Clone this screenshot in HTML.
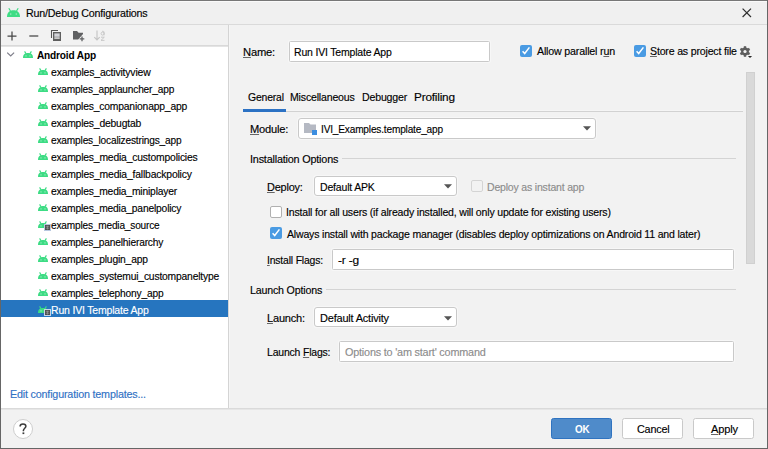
<!DOCTYPE html>
<html><head><meta charset="utf-8"><style>
html,body{margin:0;padding:0;width:768px;height:449px;overflow:hidden;background:#f2f2f2}
.r{position:absolute;display:block}
.t{position:absolute;white-space:pre;font-family:"Liberation Sans",sans-serif;font-size:11.5px;letter-spacing:-0.2px;line-height:15px;color:#000;-webkit-text-stroke:0.15px currentColor;transform-origin:0 0}
u{text-decoration:underline;text-decoration-color:#666;text-underline-offset:0.5px}
</style></head><body>
<div class="r" style="left:0px;top:0px;width:768px;height:449px;background:#f2f2f2"></div>
<div class="r" style="left:1px;top:1px;width:766px;height:23px;background:#f0f0f0"></div>
<div class="r" style="left:1px;top:1px;width:766px;height:1px;background:#fafafa"></div>
<div class="r" style="left:0px;top:24px;width:768px;height:1px;background:#dadada"></div>
<svg class="r" style="left:7px;top:8px" width="13" height="9" viewBox="0 0 13 9"><path d="M0 9 C0 4.4 2.4 2.2 6.5 2.2 C10.6 2.2 13 4.4 13 9 Z" fill="#3ddc84"/><path d="M1.8 0.3 L3.5 3 M11.2 0.3 L9.5 3" stroke="#3ddc84" stroke-width="1.2"/><rect x="3.2" y="5.3" width="1.1" height="1.5" fill="#a4ecc4"/><rect x="8.7" y="5.3" width="1.1" height="1.5" fill="#a4ecc4"/></svg>
<div class="t" style="left:26px;top:6px;transform:scaleX(0.9295);">Run/Debug Configurations</div>
<svg class="r" style="left:742px;top:8px" width="10" height="10" viewBox="0 0 10 10"><path d="M0.6 0.6 L9 9 M9 0.6 L0.6 9" stroke="#2e2e2e" stroke-width="1.2"/></svg>
<div class="r" style="left:1px;top:25px;width:227px;height:20px;background:#f2f2f2"></div>
<div class="r" style="left:1px;top:45px;width:227px;height:1px;background:#d9d9d9"></div>
<div class="r" style="left:1px;top:46px;width:227px;height:1px;background:#e4e4e4"></div>
<div class="r" style="left:1px;top:47px;width:227px;height:361px;background:#fff"></div>
<div class="r" style="left:228px;top:25px;width:1px;height:385px;background:#d4d4d4"></div>
<div class="r" style="left:229px;top:25px;width:1px;height:384px;background:#f6f6f6"></div>
<svg class="r" style="left:7px;top:31px" width="10" height="10" viewBox="0 0 10 10"><path d="M5 0.5 V9.5 M0.5 5 H9.5" stroke="#464646" stroke-width="1.25"/></svg>
<svg class="r" style="left:29px;top:31px" width="10" height="10" viewBox="0 0 10 10"><path d="M0.3 5 H9.3" stroke="#464646" stroke-width="1.25"/></svg>
<svg class="r" style="left:50px;top:29px" width="12" height="13" viewBox="0 0 12 13"><path d="M1.5 9 V1.5 H8" stroke="#555" stroke-width="1.1" fill="none"/><rect x="3" y="3" width="8" height="9" fill="#5e5e5e"/><rect x="4.3" y="4.4" width="5.4" height="3.4" fill="#d2d3d8"/><rect x="4.3" y="8.4" width="5.4" height="1.3" fill="#f4f4f4"/></svg>
<svg class="r" style="left:73px;top:31px" width="12" height="11" viewBox="0 0 12 11"><path d="M0 0 H4 L5.6 1.8 H10 V3 L5.2 8.5 H0 Z" fill="#5f6062"/><path d="M9 5.6 V10.2 M6.7 7.9 H11.3" stroke="#5f6062" stroke-width="1.3"/></svg>
<svg class="r" style="left:93px;top:29px" width="13" height="13" viewBox="0 0 13 13"><path d="M4 1.5 V11 M1.3 8.2 L4 11 L6.7 8.2" stroke="#c4c4c4" stroke-width="1.1" fill="none"/><circle cx="9.6" cy="4.6" r="1.5" stroke="#c4c4c4" stroke-width="0.9" fill="none"/><path d="M9.2 2.3 C10.5 2 11.1 2.5 11.1 3.5 V6.3" stroke="#c4c4c4" stroke-width="0.9" fill="none"/><path d="M8 8.2 H11.3 L8 11.4 H11.5" stroke="#c4c4c4" stroke-width="0.9" fill="none"/></svg>
<svg class="r" style="left:7px;top:52px" width="8" height="5" viewBox="0 0 8 5"><path d="M0.2 0.6 L3.7 4 L7.1 0.6" stroke="#7f7f8a" stroke-width="1.2" fill="none"/></svg>
<svg class="r" style="left:23px;top:51px" width="10" height="7" viewBox="0 0 10 7"><path d="M0 7 C0 3.2 2 2 5 2 C8 2 10 3.2 10 7 Z" fill="#3ddc84"/><path d="M1.6 0.4 L3 2.6 M8.4 0.4 L7 2.6" stroke="#3ddc84" stroke-width="1.1"/><rect x="2.5" y="4.3" width="1" height="1.2" fill="#b5f0cf"/><rect x="6.5" y="4.3" width="1" height="1.2" fill="#b5f0cf"/></svg>
<div class="t" style="left:37px;top:48px;transform:scaleX(0.8788);font-weight:bold;-webkit-text-stroke:0">Android App</div>
<svg class="r" style="left:38px;top:68px" width="10" height="7" viewBox="0 0 10 7"><path d="M0 7 C0 3.2 2 2 5 2 C8 2 10 3.2 10 7 Z" fill="#3ddc84"/><path d="M1.6 0.4 L3 2.6 M8.4 0.4 L7 2.6" stroke="#3ddc84" stroke-width="1.1"/><rect x="2.5" y="4.3" width="1" height="1.2" fill="#b5f0cf"/><rect x="6.5" y="4.3" width="1" height="1.2" fill="#b5f0cf"/></svg>
<div class="t" style="left:51px;top:65px;transform:scaleX(0.9083);">examples_activityview</div>
<svg class="r" style="left:38px;top:85px" width="10" height="7" viewBox="0 0 10 7"><path d="M0 7 C0 3.2 2 2 5 2 C8 2 10 3.2 10 7 Z" fill="#3ddc84"/><path d="M1.6 0.4 L3 2.6 M8.4 0.4 L7 2.6" stroke="#3ddc84" stroke-width="1.1"/><rect x="2.5" y="4.3" width="1" height="1.2" fill="#b5f0cf"/><rect x="6.5" y="4.3" width="1" height="1.2" fill="#b5f0cf"/></svg>
<div class="t" style="left:51px;top:82px;transform:scaleX(0.8813);">examples_applauncher_app</div>
<svg class="r" style="left:38px;top:102px" width="10" height="7" viewBox="0 0 10 7"><path d="M0 7 C0 3.2 2 2 5 2 C8 2 10 3.2 10 7 Z" fill="#3ddc84"/><path d="M1.6 0.4 L3 2.6 M8.4 0.4 L7 2.6" stroke="#3ddc84" stroke-width="1.1"/><rect x="2.5" y="4.3" width="1" height="1.2" fill="#b5f0cf"/><rect x="6.5" y="4.3" width="1" height="1.2" fill="#b5f0cf"/></svg>
<div class="t" style="left:51px;top:99px;transform:scaleX(0.8974);">examples_companionapp_app</div>
<svg class="r" style="left:38px;top:119px" width="10" height="7" viewBox="0 0 10 7"><path d="M0 7 C0 3.2 2 2 5 2 C8 2 10 3.2 10 7 Z" fill="#3ddc84"/><path d="M1.6 0.4 L3 2.6 M8.4 0.4 L7 2.6" stroke="#3ddc84" stroke-width="1.1"/><rect x="2.5" y="4.3" width="1" height="1.2" fill="#b5f0cf"/><rect x="6.5" y="4.3" width="1" height="1.2" fill="#b5f0cf"/></svg>
<div class="t" style="left:51px;top:116px;transform:scaleX(0.899);">examples_debugtab</div>
<svg class="r" style="left:38px;top:136px" width="10" height="7" viewBox="0 0 10 7"><path d="M0 7 C0 3.2 2 2 5 2 C8 2 10 3.2 10 7 Z" fill="#3ddc84"/><path d="M1.6 0.4 L3 2.6 M8.4 0.4 L7 2.6" stroke="#3ddc84" stroke-width="1.1"/><rect x="2.5" y="4.3" width="1" height="1.2" fill="#b5f0cf"/><rect x="6.5" y="4.3" width="1" height="1.2" fill="#b5f0cf"/></svg>
<div class="t" style="left:51px;top:133px;transform:scaleX(0.8823);">examples_localizestrings_app</div>
<svg class="r" style="left:38px;top:153px" width="10" height="7" viewBox="0 0 10 7"><path d="M0 7 C0 3.2 2 2 5 2 C8 2 10 3.2 10 7 Z" fill="#3ddc84"/><path d="M1.6 0.4 L3 2.6 M8.4 0.4 L7 2.6" stroke="#3ddc84" stroke-width="1.1"/><rect x="2.5" y="4.3" width="1" height="1.2" fill="#b5f0cf"/><rect x="6.5" y="4.3" width="1" height="1.2" fill="#b5f0cf"/></svg>
<div class="t" style="left:51px;top:150px;transform:scaleX(0.8994);">examples_media_custompolicies</div>
<svg class="r" style="left:38px;top:170px" width="10" height="7" viewBox="0 0 10 7"><path d="M0 7 C0 3.2 2 2 5 2 C8 2 10 3.2 10 7 Z" fill="#3ddc84"/><path d="M1.6 0.4 L3 2.6 M8.4 0.4 L7 2.6" stroke="#3ddc84" stroke-width="1.1"/><rect x="2.5" y="4.3" width="1" height="1.2" fill="#b5f0cf"/><rect x="6.5" y="4.3" width="1" height="1.2" fill="#b5f0cf"/></svg>
<div class="t" style="left:51px;top:167px;transform:scaleX(0.9026);">examples_media_fallbackpolicy</div>
<svg class="r" style="left:38px;top:187px" width="10" height="7" viewBox="0 0 10 7"><path d="M0 7 C0 3.2 2 2 5 2 C8 2 10 3.2 10 7 Z" fill="#3ddc84"/><path d="M1.6 0.4 L3 2.6 M8.4 0.4 L7 2.6" stroke="#3ddc84" stroke-width="1.1"/><rect x="2.5" y="4.3" width="1" height="1.2" fill="#b5f0cf"/><rect x="6.5" y="4.3" width="1" height="1.2" fill="#b5f0cf"/></svg>
<div class="t" style="left:51px;top:184px;transform:scaleX(0.8957);">examples_media_miniplayer</div>
<svg class="r" style="left:38px;top:204px" width="10" height="7" viewBox="0 0 10 7"><path d="M0 7 C0 3.2 2 2 5 2 C8 2 10 3.2 10 7 Z" fill="#3ddc84"/><path d="M1.6 0.4 L3 2.6 M8.4 0.4 L7 2.6" stroke="#3ddc84" stroke-width="1.1"/><rect x="2.5" y="4.3" width="1" height="1.2" fill="#b5f0cf"/><rect x="6.5" y="4.3" width="1" height="1.2" fill="#b5f0cf"/></svg>
<div class="t" style="left:51px;top:201px;transform:scaleX(0.8945);">examples_media_panelpolicy</div>
<svg class="r" style="left:38px;top:221px" width="10" height="7" viewBox="0 0 10 7"><path d="M0 7 C0 3.2 2 2 5 2 C8 2 10 3.2 10 7 Z" fill="#3ddc84"/><path d="M1.6 0.4 L3 2.6 M8.4 0.4 L7 2.6" stroke="#3ddc84" stroke-width="1.1"/><rect x="2.5" y="4.3" width="1" height="1.2" fill="#b5f0cf"/><rect x="6.5" y="4.3" width="1" height="1.2" fill="#b5f0cf"/></svg>
<svg class="r" style="left:43.5px;top:224px" width="7" height="7" viewBox="0 0 7 7"><rect x="0.5" y="0.5" width="6" height="6" fill="#4e4e4e" stroke="#b8c8e0"/><path d="M1.8 2.3 H5.2 M1.8 4.2 H5.2 M3.5 1.8 V5.5" stroke="#9a9a9a" stroke-width=".7"/></svg>
<div class="t" style="left:51px;top:218px;transform:scaleX(0.878);">examples_media_source</div>
<svg class="r" style="left:38px;top:238px" width="10" height="7" viewBox="0 0 10 7"><path d="M0 7 C0 3.2 2 2 5 2 C8 2 10 3.2 10 7 Z" fill="#3ddc84"/><path d="M1.6 0.4 L3 2.6 M8.4 0.4 L7 2.6" stroke="#3ddc84" stroke-width="1.1"/><rect x="2.5" y="4.3" width="1" height="1.2" fill="#b5f0cf"/><rect x="6.5" y="4.3" width="1" height="1.2" fill="#b5f0cf"/></svg>
<div class="t" style="left:51px;top:235px;transform:scaleX(0.8873);">examples_panelhierarchy</div>
<svg class="r" style="left:38px;top:255px" width="10" height="7" viewBox="0 0 10 7"><path d="M0 7 C0 3.2 2 2 5 2 C8 2 10 3.2 10 7 Z" fill="#3ddc84"/><path d="M1.6 0.4 L3 2.6 M8.4 0.4 L7 2.6" stroke="#3ddc84" stroke-width="1.1"/><rect x="2.5" y="4.3" width="1" height="1.2" fill="#b5f0cf"/><rect x="6.5" y="4.3" width="1" height="1.2" fill="#b5f0cf"/></svg>
<div class="t" style="left:51px;top:252px;transform:scaleX(0.8953);">examples_plugin_app</div>
<svg class="r" style="left:38px;top:272px" width="10" height="7" viewBox="0 0 10 7"><path d="M0 7 C0 3.2 2 2 5 2 C8 2 10 3.2 10 7 Z" fill="#3ddc84"/><path d="M1.6 0.4 L3 2.6 M8.4 0.4 L7 2.6" stroke="#3ddc84" stroke-width="1.1"/><rect x="2.5" y="4.3" width="1" height="1.2" fill="#b5f0cf"/><rect x="6.5" y="4.3" width="1" height="1.2" fill="#b5f0cf"/></svg>
<div class="t" style="left:51px;top:269px;transform:scaleX(0.8952);">examples_systemui_custompaneltype</div>
<svg class="r" style="left:38px;top:289px" width="10" height="7" viewBox="0 0 10 7"><path d="M0 7 C0 3.2 2 2 5 2 C8 2 10 3.2 10 7 Z" fill="#3ddc84"/><path d="M1.6 0.4 L3 2.6 M8.4 0.4 L7 2.6" stroke="#3ddc84" stroke-width="1.1"/><rect x="2.5" y="4.3" width="1" height="1.2" fill="#b5f0cf"/><rect x="6.5" y="4.3" width="1" height="1.2" fill="#b5f0cf"/></svg>
<div class="t" style="left:51px;top:286px;transform:scaleX(0.8873);">examples_telephony_app</div>
<div class="r" style="left:1px;top:300px;width:227px;height:17px;background:#2675bf"></div>
<svg class="r" style="left:38px;top:306px" width="10" height="7" viewBox="0 0 10 7"><path d="M0 7 C0 3.2 2 2 5 2 C8 2 10 3.2 10 7 Z" fill="#3ddc84"/><path d="M1.6 0.4 L3 2.6 M8.4 0.4 L7 2.6" stroke="#3ddc84" stroke-width="1.1"/><rect x="2.5" y="4.3" width="1" height="1.2" fill="#b5f0cf"/><rect x="6.5" y="4.3" width="1" height="1.2" fill="#b5f0cf"/></svg>
<svg class="r" style="left:43.5px;top:309px" width="7" height="7" viewBox="0 0 7 7"><rect x="0.5" y="0.5" width="6" height="6" fill="#4e4e4e" stroke="#c8d4e8"/><path d="M1.8 2.3 H5.2 M1.8 4.2 H5.2 M3.5 1.8 V5.5" stroke="#9a9a9a" stroke-width=".7"/></svg>
<div class="t" style="left:51px;top:303px;transform:scaleX(0.9124);color:#fff">Run IVI Template App</div>
<div class="t" style="left:10px;top:387px;transform:scaleX(0.935);color:#3071c4">Edit configuration templates...</div>
<div class="r" style="left:1px;top:408px;width:766px;height:1px;background:#dadada"></div>
<div class="r" style="left:1px;top:409px;width:766px;height:1px;background:#e6e6e6"></div>
<svg class="r" style="left:13px;top:419px" width="20" height="20" viewBox="0 0 20 20"><circle cx="10" cy="10" r="9.5" fill="#fff" stroke="#cdcdcd"/><path d="M7.1 7.4 C7.1 5.6 8.4 4.9 10 4.9 C11.7 4.9 12.9 5.8 12.9 7.3 C12.9 9.1 10.4 9.4 10.4 11.5 V12.2" stroke="#3c3c3c" stroke-width="1.5" fill="none"/><rect x="9.5" y="13.4" width="1.8" height="1.7" fill="#3c3c3c"/></svg>
<div class="r" style="left:551px;top:418px;width:59px;height:19px;background:#4f8bca;border:1px solid #2f73c0;border-radius:2.5px"></div>
<div class="t" style="left:575px;top:422px;transform:scaleX(0.9533);color:#fff;font-weight:bold;-webkit-text-stroke:0;transform:scaleX(0.86)">OK</div>
<div class="r" style="left:622px;top:418px;width:59px;height:19px;background:#fff;border:1px solid #c9c9c9;border-radius:2.5px"></div>
<div class="t" style="left:637px;top:422px;transform:scaleX(0.9406);">Cancel</div>
<div class="r" style="left:693px;top:418px;width:59px;height:19px;background:#fff;border:1px solid #c9c9c9;border-radius:2.5px"></div>
<div class="t" style="left:711px;top:422px;transform:scaleX(0.9667);"><u>A</u>pply</div>
<div class="t" style="left:243px;top:45px;transform:scaleX(0.9733);"><u>N</u>ame:</div>
<div class="r" style="left:289px;top:41px;width:199px;height:19px;background:#fff;border:1px solid #c9c9c9;border-radius:1.5px;box-shadow:0 0 0 1px #f7f7f7"></div>
<div class="t" style="left:294px;top:45px;transform:scaleX(0.9124);">Run IVI Template App</div>
<svg class="r" style="left:520px;top:45px" width="12" height="12" viewBox="0 0 12 12"><rect x="0" y="0" width="12" height="12" rx="2" fill="#4a9be3"/><path d="M2.6 6.2 L4.7 8.5 L9.4 2.4" stroke="#fff" stroke-width="1.5" fill="none"/></svg>
<div class="t" style="left:537px;top:44px;transform:scaleX(0.9277);">Allow parallel r<u>u</u>n</div>
<svg class="r" style="left:634px;top:45px" width="12" height="12" viewBox="0 0 12 12"><rect x="0" y="0" width="12" height="12" rx="2" fill="#4a9be3"/><path d="M2.6 6.2 L4.7 8.5 L9.4 2.4" stroke="#fff" stroke-width="1.5" fill="none"/></svg>
<div class="t" style="left:650px;top:44px;transform:scaleX(0.9207);"><u>S</u>tore as project file</div>
<svg class="r" style="left:739px;top:45px" width="14" height="14" viewBox="0 0 14 14"><g fill="#5e5e5e"><circle cx="6" cy="6.5" r="3.9"/><rect x="4.8" y="1.2" width="2.4" height="10.6"/><rect x="4.8" y="1.2" width="2.4" height="10.6" transform="rotate(60 6 6.5)"/><rect x="4.8" y="1.2" width="2.4" height="10.6" transform="rotate(120 6 6.5)"/></g><circle cx="6" cy="6.5" r="1.6" fill="#f2f2f2"/><path d="M8.3 10.4 H13.7 L11 13.3 Z" fill="#f2f2f2"/><path d="M8.9 10.9 H13.1 L11 13 Z" fill="#2a2a2a"/></svg>
<div class="t" style="left:248px;top:90px;transform:scaleX(0.9054);">General</div>
<div class="t" style="left:290px;top:90px;transform:scaleX(0.9191);">Miscellaneous</div>
<div class="t" style="left:362px;top:90px;transform:scaleX(0.9213);">Debugger</div>
<div class="t" style="left:414px;top:90px;transform:scaleX(1.027);">Profiling</div>
<div class="r" style="left:243px;top:111px;width:500px;height:1px;background:#d2d2d2"></div>
<div class="r" style="left:243px;top:110px;width:500px;height:1px;background:#f5f5f5"></div>
<div class="r" style="left:243px;top:109px;width:43px;height:3px;background:#2c72c4"></div>
<div class="r" style="left:746px;top:72px;width:9px;height:192px;background:#d9d9d9;box-sizing:border-box;border:1px solid #d0d0d0"></div>
<div class="t" style="left:250px;top:122px;transform:scaleX(0.9676);"><u>M</u>odule:</div>
<div class="r" style="left:298px;top:118px;width:296px;height:19px;background:#fff;border:1px solid #c9c9c9;border-radius:3px;box-shadow:0 0 0 1px #f7f7f7"></div>
<svg class="r" style="left:304px;top:123px" width="13" height="12" viewBox="0 0 13 12"><path d="M0 0 H5 L6.5 1.5 H12 V7 H8 V10 H0 Z" fill="#b5b9c3"/><rect x="8" y="7" width="5" height="5" fill="#3c8ee0"/></svg>
<div class="t" style="left:321px;top:122px;transform:scaleX(0.8781);">IVI_Examples.template_app</div>
<svg class="r" style="left:583px;top:126px" width="8" height="5" viewBox="0 0 8 5"><path d="M0 0.2 H8 L4 4.6 Z" fill="#555"/></svg>
<div class="t" style="left:250px;top:152px;transform:scaleX(0.9402);">Installation Options</div>
<div class="r" style="left:342px;top:158px;width:394px;height:1px;background:#d4d4d4"></div>
<div class="t" style="left:267px;top:180px;transform:scaleX(0.9486);"><u>D</u>eploy:</div>
<div class="r" style="left:314px;top:176px;width:141px;height:18px;background:#fff;border:1px solid #c9c9c9;border-radius:3px;box-shadow:0 0 0 1px #f7f7f7"></div>
<div class="t" style="left:320px;top:180px;transform:scaleX(0.9138);">Default APK</div>
<svg class="r" style="left:444px;top:184px" width="8" height="5" viewBox="0 0 8 5"><path d="M0 0.2 H8 L4 4.6 Z" fill="#555"/></svg>
<svg class="r" style="left:471px;top:180px" width="12" height="12" viewBox="0 0 12 12"><rect x="0.5" y="0.5" width="11" height="11" rx="1.5" fill="#f2f2f2" stroke="#d4d4d4"/></svg>
<div class="t" style="left:487px;top:180px;transform:scaleX(0.9135);color:#8c8c8c">Deploy as instant app</div>
<svg class="r" style="left:270px;top:206px" width="12" height="12" viewBox="0 0 12 12"><rect x="0.5" y="0.5" width="11" height="11" rx="1.5" fill="#fff" stroke="#b0b0b0"/></svg>
<div class="t" style="left:286px;top:205px;transform:scaleX(0.9159);">Install for all users (if already installed, will only update for existing users)</div>
<svg class="r" style="left:270px;top:227px" width="12" height="12" viewBox="0 0 12 12"><rect x="0" y="0" width="12" height="12" rx="2" fill="#4a9be3"/><path d="M2.6 6.2 L4.7 8.5 L9.4 2.4" stroke="#fff" stroke-width="1.5" fill="none"/></svg>
<div class="t" style="left:287px;top:227px;transform:scaleX(0.9156);">Always install with package manager (disables deploy optimizations on Android 11 and later)</div>
<div class="t" style="left:267px;top:253px;transform:scaleX(0.9051);"><u>I</u>nstall Flags:</div>
<div class="r" style="left:332px;top:249px;width:400px;height:19px;background:#fff;border:1px solid #c9c9c9;border-radius:1.5px;box-shadow:0 0 0 1px #f7f7f7"></div>
<div class="t" style="left:338px;top:253px;transform:scaleX(1.0389);">-r -g</div>
<div class="t" style="left:250px;top:283px;transform:scaleX(0.9263);">Launch Options</div>
<div class="r" style="left:326px;top:289px;width:410px;height:1px;background:#d4d4d4"></div>
<div class="t" style="left:267px;top:311px;transform:scaleX(0.9595);"><u>L</u>aunch:</div>
<div class="r" style="left:314px;top:307px;width:141px;height:18px;background:#fff;border:1px solid #c9c9c9;border-radius:3px;box-shadow:0 0 0 1px #f7f7f7"></div>
<div class="t" style="left:320px;top:311px;transform:scaleX(0.9535);">Default Activity</div>
<svg class="r" style="left:444px;top:316px" width="8" height="5" viewBox="0 0 8 5"><path d="M0 0.2 H8 L4 4.6 Z" fill="#555"/></svg>
<div class="t" style="left:267px;top:345px;transform:scaleX(0.909);">Launch <u>F</u>lags:</div>
<div class="r" style="left:339px;top:341px;width:393px;height:19px;background:#fff;border:1px solid #c9c9c9;border-radius:1.5px;box-shadow:0 0 0 1px #f7f7f7"></div>
<div class="t" style="left:345px;top:345px;transform:scaleX(0.9405);color:#8c8c8c">Options to 'am start' command</div>
<div class="r" style="left:0px;top:0px;width:768px;height:1px;background:#777"></div>
<div class="r" style="left:0px;top:448px;width:768px;height:1px;background:#666"></div>
<div class="r" style="left:0px;top:0px;width:1px;height:449px;background:#666"></div>
<div class="r" style="left:767px;top:0px;width:1px;height:449px;background:#666"></div>
</body></html>
